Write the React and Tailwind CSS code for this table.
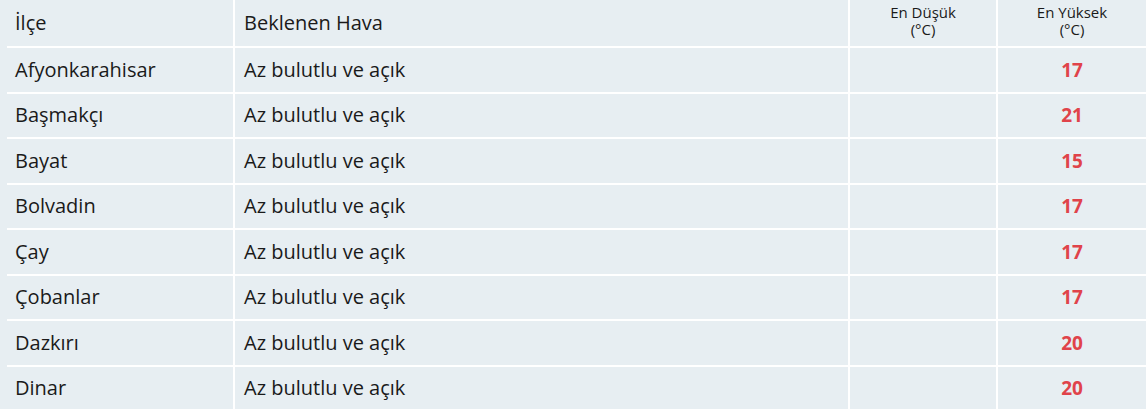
const rows = [
  ["Afyonkarahisar", "Az bulutlu ve açık", "17"],
  ["Başmakçı", "Az bulutlu ve açık", "21"],
  ["Bayat", "Az bulutlu ve açık", "15"],
  ["Bolvadin", "Az bulutlu ve açık", "17"],
  ["Çay", "Az bulutlu ve açık", "17"],
  ["Çobanlar", "Az bulutlu ve açık", "17"],
  ["Dazkırı", "Az bulutlu ve açık", "20"],
  ["Dinar", "Az bulutlu ve açık", "20"],
];

export default function App() {
  return (
    <div
      className="w-[1148px] h-[409px] overflow-hidden bg-[#e7eef2] pl-[7px] text-[#1a1a1a]"
      style={{ fontFamily: '"Open Sans", "Noto Sans", sans-serif' }}
    >
      <table className="w-[1140px] border-collapse table-fixed">
        <colgroup>
          <col className="w-[227px]" />
          <col className="w-[615px]" />
          <col className="w-[148px]" />
          <col className="w-[150px]" />
        </colgroup>
        <thead>
          <tr className="h-[47px] border-b-2 border-white">
            <th className="text-left font-normal text-[20px] pl-[8px] align-middle">İlçe</th>
            <th className="text-left font-normal text-[20px] pl-[9px] border-l-2 border-white align-middle">
              Beklenen Hava
            </th>
            <th className="font-normal text-[15px] leading-[17px] align-top pt-[4px] border-l-2 border-white">
              En Düşük
              <br />
              (°C)
            </th>
            <th className="font-normal text-[15px] leading-[17px] align-top pt-[4px] border-l-2 border-r-2 border-white">
              En Yüksek
              <br />
              (°C)
            </th>
          </tr>
        </thead>
        <tbody>
          {rows.map(([name, weather, hi]) => (
            <tr key={name} className="h-[45.5px] border-b-2 border-white">
              <td className="text-[20px] pl-[8px]">{name}</td>
              <td className="text-[20px] pl-[9px] border-l-2 border-white">{weather}</td>
              <td className="border-l-2 border-white"></td>
              <td className="border-l-2 border-r-2 border-white text-center text-[19px] font-bold text-[#e0434a]">
                {hi}
              </td>
            </tr>
          ))}
        </tbody>
      </table>
    </div>
  );
}
